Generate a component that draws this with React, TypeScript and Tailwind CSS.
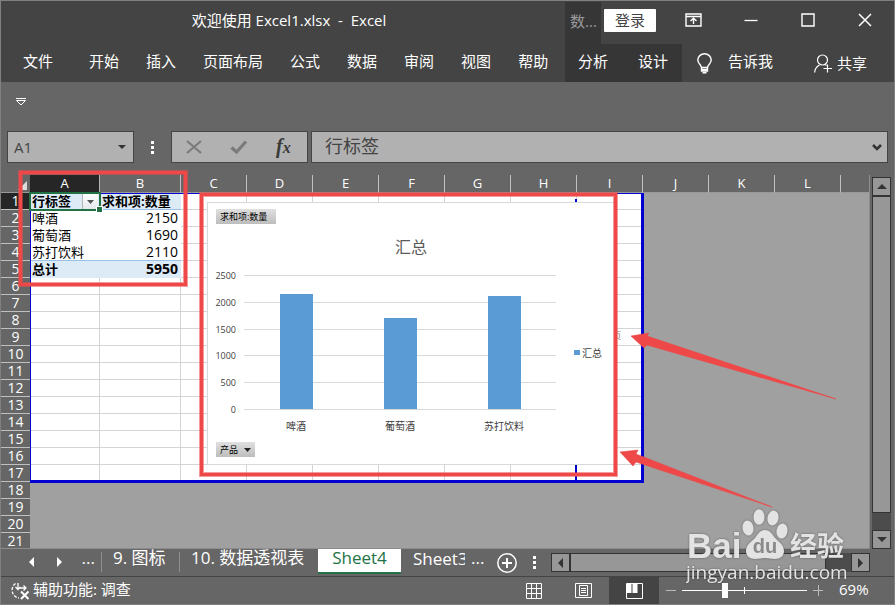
import React from "react";

const RIBBON_TABS = ["开始", "插入", "页面布局", "公式", "数据", "审阅", "视图", "帮助"];
const COLUMNS = ["A", "B", "C", "D", "E", "F", "G", "H", "I", "J", "K", "L"];
const PRINT_COLUMNS = 9;
const PRINT_ROWS = 17;
const ROW_COUNT = 21;

const PIVOT: Record<number, [string, string]> = {
  1: ["行标签", "求和项:数量"],
  2: ["啤酒", "2150"],
  3: ["葡萄酒", "1690"],
  4: ["苏打饮料", "2110"],
  5: ["总计", "5950"],
};

const SERIES = [
  { label: "啤酒", value: 2150, x: 73 },
  { label: "葡萄酒", value: 1690, x: 177 },
  { label: "苏打饮料", value: 2110, x: 281 },
];
const TICKS = [2500, 2000, 1500, 1000, 500, 0];
const PLOT_BOTTOM = 207;
const PLOT_HEIGHT = 134;

function yOf(value: number) {
  return Math.round(PLOT_BOTTOM - (value / 2500) * PLOT_HEIGHT);
}

function TitleBar() {
  return (
    <header className="flex h-[43px] shrink-0 bg-[#444444] text-white">
      <h1 className="flex-1 whitespace-pre pt-[7px] pl-3 text-center text-[15px] leading-6">
        欢迎使用 Excel1.xlsx{"  -  "}Excel
      </h1>
      <div className="flex w-[329px] shrink-0">
        <span className="mt-px w-9 bg-[#363636] pt-[7px] pl-[5px] text-[15px] leading-6 text-[#9b9b9b]">数...</span>
        <button className="mt-2 ml-[3px] h-[23px] w-[52px] rounded-[1px] bg-white text-[15px] leading-[23px] text-[#444444]">
          登录
        </button>
        <div className="ml-[9px] flex flex-1">
          <button aria-label="功能区显示选项" className="flex h-[38px] flex-1 items-center justify-center">
            <svg width="17" height="14" viewBox="0 0 17 14" fill="none" stroke="white">
              <path d="M1 1h15v12H1z" strokeWidth="1.4" />
              <path d="M1 3.5h15M8.5 11V5.5M5.5 8l3-2.7 3 2.7" strokeWidth="1.4" />
            </svg>
          </button>
          <button aria-label="最小化" className="flex h-[38px] flex-1 items-center justify-center">
            <svg width="14" height="14" viewBox="0 0 14 14" stroke="white">
              <path d="M0.5 7.5h13" strokeWidth="1.3" />
            </svg>
          </button>
          <button aria-label="最大化" className="flex h-[38px] flex-1 items-center justify-center">
            <svg width="14" height="14" viewBox="0 0 14 14" fill="none" stroke="white">
              <path d="M1 1h12v12H1z" strokeWidth="1.4" />
            </svg>
          </button>
          <button aria-label="关闭" className="flex h-[38px] flex-1 items-center justify-center">
            <svg width="14" height="14" viewBox="0 0 14 14" stroke="white">
              <path d="M1 1l12 12M13 1L1 13" strokeWidth="1.5" />
            </svg>
          </button>
        </div>
      </div>
    </header>
  );
}

function Ribbon() {
  return (
    <nav className="flex h-[38px] shrink-0 bg-[#444444] text-[15px] leading-6 text-white">
      <div className="flex flex-1 gap-[27px] whitespace-nowrap pb-1 pl-[22px]">
        <button className="mr-[9px]">文件</button>
        {RIBBON_TABS.map((tab) => (
          <button key={tab}>{tab}</button>
        ))}
      </div>
      <div className="flex w-[329px] shrink-0 whitespace-nowrap">
        <div className="flex w-[117px] gap-[30px] bg-[#363636] pb-1 pl-[13px]">
          <button>分析</button>
          <button>设计</button>
        </div>
        <button className="ml-[15px] flex items-center gap-4">
          <svg width="15" height="21" viewBox="0 0 15 21" fill="none" stroke="white" strokeWidth="1.4">
            <path d="M4.5 14.5c0-2.5-3.7-3.8-3.7-7.5A6.7 6.2 0 0 1 14.2 7c0 3.7-3.7 5-3.7 7.5z" />
            <path d="M4.5 14.5v3.5h6v-3.5M4.5 16.5h6M5.5 19.7h4" />
          </svg>
          <span className="pb-1">告诉我</span>
        </button>
        <button className="mr-[27px] ml-auto flex items-center gap-1 pt-px">
          <svg width="19" height="19" viewBox="0 0 19 19" fill="none" stroke="white" strokeWidth="1.2">
            <circle cx="8.5" cy="6" r="5" />
            <path d="M0.7 18.5c0-3.5 1.8-5.8 4.8-7.5M11 10.500l1.500 1M13.500 10.500v8M9.500 14.500h8.500" />
          </svg>
          <span className="pb-[2px]">共享</span>
        </button>
      </div>
    </nav>
  );
}

function FormulaBar() {
  return (
    <div className="flex h-8 shrink-0 pr-[6px] pl-[6px]">
      <div className="flex w-[127px] border border-[#444444] bg-[#b1b1b1]">
        <input
          aria-label="名称框"
          defaultValue="A1"
          className="w-full min-w-0 bg-transparent pl-[6px] text-[15px] text-[#444444] outline-none"
        />
        <button aria-label="名称列表" className="w-6 shrink-0">
          <svg className="ml-[9px]" width="8" height="4" viewBox="0 0 8 4" fill="#333333">
            <path d="M0 0h8L4 4z" />
          </svg>
        </button>
      </div>
      <div className="flex w-[37px] flex-col items-center justify-center gap-[2px]">
        <i className="size-[3px] bg-white" />
        <i className="size-[3px] bg-white" />
        <i className="size-[3px] bg-white" />
      </div>
      <div className="flex w-[137px] items-center border border-[#444444] bg-[#b1b1b1]">
        <button aria-label="取消" className="ml-[14px]">
          <svg width="16" height="14" viewBox="0 0 16 14" stroke="#7b7b7b" strokeWidth="2.2">
            <path d="M1 1l14 12M15 1L1 13" />
          </svg>
        </button>
        <button aria-label="输入" className="ml-[28px]">
          <svg width="18" height="14" viewBox="0 0 18 14" fill="none" stroke="#7b7b7b" strokeWidth="3.2">
            <path d="M1.5 7.5l5 4.5L16 1.5" />
          </svg>
        </button>
        <button
          aria-label="插入函数"
          className="ml-[28px] font-['Liberation_Serif',serif] text-[20px] leading-6 font-bold text-[#3a3a3a] italic"
        >
          f<span className="text-[16px]">x</span>
        </button>
      </div>
      <div className="ml-[3px] flex flex-1 border border-[#444444] bg-[#b1b1b1]">
        <input
          aria-label="编辑栏"
          defaultValue="行标签"
          className="w-full min-w-0 bg-transparent pb-[2px] pl-[13px] text-[18px] text-[#444444] outline-none"
        />
        <button aria-label="展开编辑栏" className="w-[18px] shrink-0">
          <svg className="ml-[3px]" width="10" height="7" viewBox="0 0 10 7" fill="none" stroke="#333333" strokeWidth="2.6">
            <path d="M1 1l4 4 4-4" />
          </svg>
        </button>
      </div>
    </div>
  );
}

function PivotChart() {
  return (
    <section aria-label="数据透视图" className="absolute top-[27px] left-[206px] h-[263px] w-[410px] border border-[#d9d9d9] bg-white">
      <svg className="absolute inset-0" width="408" height="261" viewBox="1 1 408 261">
        <text x="204" y="51" textAnchor="middle" fontSize="16" fill="#595959">汇总</text>
        {TICKS.map((tick) => (
          <g key={tick}>
            <rect x="37" y={yOf(tick)} width="312" height="1" fill="#d9d9d9" />
            <text x="29" y={yOf(tick) + 4} textAnchor="end" fontSize="9" fill="#404040">{tick}</text>
          </g>
        ))}
        {SERIES.map((item) => (
          <g key={item.label}>
            <rect x={item.x} y={yOf(item.value)} width="33" height={PLOT_BOTTOM - yOf(item.value)} fill="#5b9bd5" />
            <text x={item.x + 16} y="228" textAnchor="middle" fontSize="10" fill="#404040">{item.label}</text>
          </g>
        ))}
        <rect x="367" y="148" width="6" height="5" fill="#5b9bd5" />
        <text x="375" y="155" fontSize="10" fill="#404040">汇总</text>
      </svg>
      <button className="absolute top-[6px] left-2 h-[15px] w-[60px] bg-linear-to-b from-[#e0e0e0] to-[#bdbdbd] pl-1 text-left text-[9px] leading-[15px] whitespace-nowrap text-black">
        求和项:数量
      </button>
      <button className="absolute bottom-[7px] left-2 flex h-[15px] w-[39px] items-center gap-[6px] bg-linear-to-b from-[#e0e0e0] to-[#bdbdbd] pl-1 text-[9px] leading-[15px] whitespace-nowrap text-black">
        产品
        <svg width="7" height="4" viewBox="0 0 7 4" fill="#222222">
          <path d="M0 0h7L3.5 4z" />
        </svg>
      </button>
    </section>
  );
}

function cellClass(row: number, col: number) {
  if (row > PRINT_ROWS || col >= PRINT_COLUMNS) return "";
  if (col < 2 && row === 1) return "bg-[#ddebf7] border-b border-[#9bc2e6] font-bold";
  if (col < 2 && row === 4) return "bg-white border-b border-[#9bc2e6]";
  if (col < 2 && row === 5) return "bg-[#ddebf7] border-b border-[#ddebf7] font-bold";
  if (col < 2 && row < 4) return "bg-white border-b border-white";
  return "bg-white border-r border-b border-[#d4d4d4]";
}

function Worksheet() {
  const rows = Array.from({ length: ROW_COUNT }, (_, i) => i + 1);
  return (
    <div className="relative min-w-0 flex-1 overflow-hidden border-r border-b border-[#8c8c8c] bg-[#a0a0a0]">
      <table className="w-full table-fixed border-separate border-spacing-0 text-black">
        <colgroup>
          <col className="w-[29px]" />
          <col className="w-[70px]" />
          <col className="w-[81px]" />
          {COLUMNS.slice(2).map((c) => (
            <col key={c} className="w-[66px]" />
          ))}
          <col />
        </colgroup>
        <thead>
          <tr className="h-[18px] bg-[#666666] text-[13px] leading-[17px] text-white">
            <th className="border-b border-[#999999] p-0">
              <svg className="mt-[3px] ml-[17px]" width="9" height="9" viewBox="0 0 9 9" fill="#dddddd">
                <path d="M9 0v9H0z" />
              </svg>
            </th>
            {COLUMNS.map((c) => (
              <th
                key={c}
                className={
                  c === "A"
                    ? "border-r border-b border-[#b5b5b5] bg-[#262626] p-0 font-normal"
                    : "border-r border-b border-r-[#c0c0c0] border-b-[#999999] p-0 font-normal"
                }
              >
                {c}
              </th>
            ))}
            <th className="border-b border-[#999999] p-0" />
          </tr>
        </thead>
        <tbody>
          {rows.map((r) => (
            <tr key={r} className="h-[17px] text-[13px] leading-4">
              <th
                className={
                  r === 1
                    ? "border-b border-[#c0c0c0] bg-[#262626] p-0 text-[14px] font-normal text-white"
                    : "border-b border-[#c0c0c0] bg-[#666666] p-0 text-[14px] font-normal text-white"
                }
              >
                {r}
              </th>
              {COLUMNS.map((c, i) => (
                <td key={c} className={`h-[17px] p-0 whitespace-nowrap ${cellClass(r, i)}`}>
                  {i === 0 && PIVOT[r] && <span className="pl-[2px]">{PIVOT[r][0]}</span>}
                  {i === 1 && r === 1 && <span className="pl-[2px]">{PIVOT[r][1]}</span>}
                  {i === 1 && r > 1 && PIVOT[r] && (
                    <span className="block pr-[3px] text-right text-[14px]">{PIVOT[r][1]}</span>
                  )}
                </td>
              ))}
              <td className="p-0" />
            </tr>
          ))}
        </tbody>
      </table>

      {/* print area and page break */}
      <div className="absolute top-[18px] left-[29px] h-[290px] w-[614px] border-t border-r-[3px] border-b-[3px] border-l border-[#0000d0]" />
      <div className="absolute top-[24px] left-[574px] h-[281px] w-0 border-l-2 border-[#0000d0]" />
      <span className="absolute top-[155px] left-[597px] text-[9px] leading-3 whitespace-nowrap text-[#808080]">第1页</span>

      {/* active cell */}
      <button aria-label="筛选" className="absolute top-[19px] left-[81px] flex h-[15px] w-4 items-center justify-center border-l border-[#b5b5b5] bg-linear-to-b from-white to-[#e4e9ee]">
        <svg width="7" height="4" viewBox="0 0 7 4" fill="#555555">
          <path d="M0 0h7L3.5 4z" />
        </svg>
      </button>
      <div className="absolute top-[17px] left-[28px] h-[19px] w-[72px] border-2 border-[#217346]" />
      <div className="absolute top-[31px] left-[95px] size-[7px] border border-white bg-[#217346]" />

      <PivotChart />

      {/* red call-out frame and arrows */}
      <div className="absolute top-[18px] left-[199px] h-[283px] w-[417px] border-[3px] border-[#ee4848] shadow-[0_0_0_1px_rgba(238,72,72,0.55),inset_0_0_0_1px_rgba(238,72,72,0.55)]" />
      <svg
        className="pointer-events-none absolute top-0 left-0"
        width="868"
        height="374"
        viewBox="1 175 868 374"
        fill="#ee4848"
        stroke="#ee4848"
        strokeWidth="0.6"
        strokeLinejoin="round"
      >
        <path d="M631 336l18-3-2 3 189 63-189-54-3 3z" />
        <path d="M620 452l18-2-2 4 136 53-136-45-3 4z" />
      </svg>
    </div>
  );
}

function VerticalScrollbar() {
  return (
    <div className="mt-[2px] mr-[3px] ml-[2px] flex w-[19px] shrink-0 flex-col bg-[#4c4c4c]">
      <button aria-label="向上滚动" className="flex h-[19px] items-center justify-center border border-[#333333] bg-[#979797]">
        <svg width="10" height="5" viewBox="0 0 10 5" fill="#333333">
          <path d="M0 5h10L5 0z" />
        </svg>
      </button>
      <div className="flex-1 border border-[#333333] bg-[#979797]" />
      <button aria-label="向下滚动" className="mt-[17px] flex h-[19px] items-center justify-center border border-[#333333] bg-[#979797]">
        <svg width="10" height="5" viewBox="0 0 10 5" fill="#333333">
          <path d="M0 0h10L5 5z" />
        </svg>
      </button>
    </div>
  );
}

function SheetTabs() {
  return (
    <div className="flex h-7 shrink-0 items-start border-b border-[#444444] text-[17px] leading-[18px] whitespace-nowrap text-white">
      <button aria-label="上一个工作表" className="mt-2 ml-7">
        <svg width="5" height="10" viewBox="0 0 5 10" fill="white">
          <path d="M5 0v10L0 5z" />
        </svg>
      </button>
      <button aria-label="下一个工作表" className="mt-2 ml-[23px]">
        <svg width="5" height="10" viewBox="0 0 5 10" fill="white">
          <path d="M0 0v10l5-5z" />
        </svg>
      </button>
      <button className="w-[39px] pr-[6px] text-right">...</button>
      <button className="mt-[3px] flex h-5 w-[78px] items-start border-l border-[#8f8f8f] pl-[11px]">
        <span className="-mt-[3px]">9. 图标</span>
      </button>
      <button className="mt-[3px] flex h-5 w-[138px] items-start border-l border-[#8f8f8f] pl-[11px]">
        <span className="-mt-[3px]">10. 数据透视表</span>
      </button>
      <button className="-mt-px ml-px h-[26px] w-[83px] border-b-2 border-[#217346] bg-white pb-1 text-[#217346]">Sheet4</button>
      <button className="ml-3 h-5 w-[52px] overflow-hidden text-left leading-5">Sheet3</button>
      <span className="ml-[6px] w-[19px]">...</span>
      <button aria-label="新工作表" className="mt-1 ml-[7px] size-5">
        <svg width="20" height="20" viewBox="0 0 20 20" fill="none" stroke="white">
          <circle cx="10" cy="10" r="9.2" strokeWidth="1.5" />
          <path d="M10 5v10M5 10h10" strokeWidth="2" />
        </svg>
      </button>
      <div className="ml-4 flex h-[27px] w-[3px] flex-col justify-center gap-[2px]">
        <i className="size-[3px] bg-white" />
        <i className="size-[3px] bg-white" />
        <i className="size-[3px] bg-white" />
      </div>
      <div className="mt-1 mr-6 ml-[15px] flex h-[19px] flex-1 bg-[#4c4c4c]">
        <button aria-label="向左滚动" className="flex w-[19px] items-center justify-center border border-[#333333] bg-[#979797]">
          <svg width="5" height="10" viewBox="0 0 5 10" fill="#333333">
            <path d="M5 0v10L0 5z" />
          </svg>
        </button>
        <div className="flex-1 border border-[#333333] bg-[#979797]" />
        <button aria-label="向右滚动" className="ml-[25px] flex w-[19px] items-center justify-center border border-[#333333] bg-[#979797]">
          <svg width="5" height="10" viewBox="0 0 5 10" fill="#333333">
            <path d="M0 0v10l5-5z" />
          </svg>
        </button>
      </div>
    </div>
  );
}

function StatusBar() {
  return (
    <footer className="flex h-[27px] shrink-0 items-center text-[15px] leading-6 text-white">
      <button className="ml-[9px] flex items-center gap-[3px]">
        <svg width="20" height="18" viewBox="0 0 20 18" fill="none" stroke="white" strokeWidth="1.3">
          <path d="M5.5 1.5A8 8 0 0 0 9 16" strokeDasharray="3 1.5" />
          <path d="M8 1v6M5.5 5L8 7.5 10.5 5M10 6h6M13.5 3.5L16 6l-2.5 2.5" />
          <path d="M11 9.5l7.5 7.5M18.5 9.5L11 17" strokeWidth="2" />
        </svg>
        <span className="pb-[3px]">辅助功能: 调查</span>
      </button>
      <button aria-label="普通" className="ml-auto">
        <svg width="16" height="16" viewBox="0 0 16 16" fill="none" stroke="white">
          <path d="M0.5 0.5h15v15h-15zM5.5 0v16M10.5 0v16M0 5.5h16M0 10.5h16" />
        </svg>
      </button>
      <button aria-label="页面布局视图" className="ml-[33px]">
        <svg width="17" height="15" viewBox="0 0 17 15" fill="none" stroke="white">
          <path d="M0.5 0.5h16v14h-16zM4.5 2.5h8v10h-8zM6 5.5h5M6 7.5h5M6 9.5h5" />
        </svg>
      </button>
      <button aria-label="分页预览" className="ml-[17px] flex h-full w-[50px] items-center justify-center bg-[#444444]">
        <svg width="17" height="16" viewBox="0 0 17 16">
          <path d="M0.5 0.5h16v15h-16z" fill="none" stroke="white" />
          <path d="M1 1h4.5v9H1zM6.5 1h5v9h-5z" fill="white" />
        </svg>
      </button>
      <button aria-label="缩小" className="ml-[7px]">
        <svg width="10" height="11" viewBox="0 0 10 11" stroke="#bbbbbb">
          <path d="M0 5.5h10" />
        </svg>
      </button>
      <div className="relative ml-[6px] flex h-[15px] w-[125px] items-center">
        <i className="absolute top-1 left-[62px] h-[7px] w-px bg-white" />
        <input
          type="range"
          aria-label="缩放"
          min={0}
          max={100}
          defaultValue={34}
          className="relative h-[15px] w-full appearance-none bg-transparent [&::-webkit-slider-runnable-track]:h-px [&::-webkit-slider-runnable-track]:bg-white [&::-webkit-slider-thumb]:-mt-[7px] [&::-webkit-slider-thumb]:h-[15px] [&::-webkit-slider-thumb]:w-[6px] [&::-webkit-slider-thumb]:appearance-none [&::-webkit-slider-thumb]:bg-white"
        />
      </div>
      <button aria-label="放大" className="ml-[6px]">
        <svg width="10" height="11" viewBox="0 0 10 11" stroke="#bbbbbb">
          <path d="M0 5.5h10M5.5 0v11" />
        </svg>
      </button>
      <button className="ml-4 w-[55px] pb-[3px] text-left">69%</button>
    </footer>
  );
}

function Watermark() {
  return (
    <svg
      className="pointer-events-none absolute right-[34px] bottom-[6px] drop-shadow-[0_0_1px_rgba(60,60,60,0.6)]"
      width="174"
      height="92"
      viewBox="686 507 174 92"
      fill="#e3e3e3"
    >
      <text x="687" y="559" fontSize="35" fontWeight="bold" fontFamily="'Liberation Sans', sans-serif">Bai</text>
      <ellipse cx="748" cy="529" rx="5.5" ry="7.5" transform="rotate(-10 748 529)" />
      <ellipse cx="759" cy="518" rx="5.5" ry="7.8" />
      <ellipse cx="773" cy="519" rx="5.5" ry="7.5" transform="rotate(12 773 519)" />
      <ellipse cx="782" cy="532" rx="5.5" ry="7.5" transform="rotate(10 782 532)" />
      <path d="M765 531c5 0 7 4 10 8 4 4 9 7 9 13 0 5-4 8-9 8-4 0-6-1-10-1s-6 1-10 1c-5 0-9-3-9-8 0-6 5-9 9-13 3-4 5-8 10-8z" />
      <text x="765" y="554" fontSize="20" fontWeight="bold" textAnchor="middle" fill="#8a8a8a" fontFamily="'Liberation Sans', sans-serif">du</text>
      <text x="790" y="557" fontSize="27" fontWeight="bold">经验</text>
      <text x="686" y="580" fontSize="19">jingyan.baidu.com</text>
    </svg>
  );
}

export default function App() {
  return (
    <div className="relative flex h-screen flex-col overflow-hidden border border-[#808080] bg-[#666666] font-['Open_Sans','Noto_Sans_CJK_SC',sans-serif]">
      <TitleBar />
      <Ribbon />
      <div className="h-[49px] shrink-0 pt-4 pl-[15px]">
        <button aria-label="自定义快速访问工具栏" className="block">
          <svg width="10" height="8" viewBox="0 0 10 8" fill="none" stroke="white">
            <path d="M0 0.5h10M0.5 2.5h9L5 7z" />
          </svg>
        </button>
      </div>
      <FormulaBar />
      <main className="relative flex min-h-0 flex-1 pt-3">
        <Worksheet />
        <VerticalScrollbar />
        {/* red frame around the pivot table */}
        <div className="pointer-events-none absolute top-2 left-[18px] h-[115px] w-[168px] border-[3px] border-[#ee4848] shadow-[0_0_0_1px_rgba(238,72,72,0.55),inset_0_0_0_1px_rgba(238,72,72,0.55)]" />
      </main>
      <SheetTabs />
      <StatusBar />
      <Watermark />
    </div>
  );
}
